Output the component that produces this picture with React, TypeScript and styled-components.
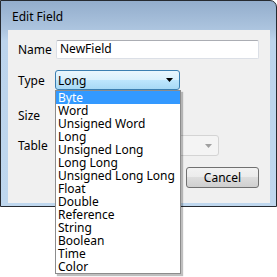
import React from 'react';
import styled, { createGlobalStyle } from 'styled-components';

const TYPES = [
  'Byte',
  'Word',
  'Unsigned Word',
  'Long',
  'Unsigned Long',
  'Long Long',
  'Unsigned Long Long',
  'Float',
  'Double',
  'Reference',
  'String',
  'Boolean',
  'Time',
  'Color',
];

const GlobalStyle = createGlobalStyle`
  html, body {
    margin: 0;
    padding: 0;
    background: #ffffff;
    font-family: 'Noto Sans', 'DejaVu Sans', sans-serif;
    font-size: 12px;
  }
`;

const Screen = styled.div`
  position: relative;
  width: 277px;
  height: 277px;
  overflow: hidden;
`;

const Window = styled.div`
  box-sizing: border-box;
  width: 277px;
  height: 207px;
  border: 1px solid #262a30;
  border-top-right-radius: 7px;
  background: linear-gradient(to bottom, #93adcc 0px, #aec6e0 30px, #bcd4ec 40px, #bfd7ee 100%);
  padding: 0 6px 3px 7px;
  display: flex;
  flex-direction: column;
`;

const TitleBar = styled.div`
  height: 29px;
  box-sizing: border-box;
  padding: 8px 0 0 4px;
  color: #000;
  font-size: 12px;
  line-height: 15px;
`;

const Client = styled.div`
  flex: 1;
  background: #f0f0f0;
  padding: 10px 10px 0 10px;
  display: flex;
  flex-direction: column;
`;

const Row = styled.div<{ $mt: number; $h: number }>`
  display: flex;
  align-items: center;
  margin-top: ${(p) => p.$mt}px;
  height: ${(p) => p.$h}px;
`;

const Label = styled.div`
  width: 37px;
  color: #000;
  line-height: 15px;
`;

const TextBox = styled.div`
  box-sizing: border-box;
  margin-left: 1px;
  width: 203px;
  height: 19px;
  border: 1px solid #dbdfe6;
  border-top-color: #abadb3;
  border-radius: 2px;
  background: #fff;
  padding-left: 3px;
  line-height: 16px;
  color: #000;
`;

const Combo = styled.div<{ $width: number; $disabled?: boolean }>`
  box-sizing: border-box;
  width: ${(p) => p.$width}px;
  height: 100%;
  display: flex;
  align-items: center;
  justify-content: space-between;
  padding: 0 3px 0 2px;
  border: 1px solid ${(p) => (p.$disabled ? '#d4d4d4' : '#3c7fb1')};
  border-radius: 3px;
  color: #000;
  background: ${(p) =>
    p.$disabled
      ? '#f4f4f4'
      : 'linear-gradient(to bottom, #eaf6fd 0%, #d9f0fc 50%, #bee6fd 50%, #a7d9f5 100%)'};
  svg {
    margin-right: 3px;
  }
`;

const Buttons = styled.div`
  display: flex;
  justify-content: flex-end;
  margin-top: 11px;
  margin-right: 1px;
`;

const Button = styled.div`
  box-sizing: border-box;
  width: 73px;
  height: 21px;
  border: 1px solid #707070;
  border-radius: 3px;
  background: linear-gradient(to bottom, #f2f2f2 0%, #ebebeb 50%, #dddddd 50%, #cfcfcf 100%);
  display: flex;
  align-items: center;
  justify-content: center;
  color: #000;
`;

const DropList = styled.ul`
  position: absolute;
  left: 55px;
  top: 90px;
  width: 126px;
  box-sizing: border-box;
  margin: 0;
  padding: 0;
  list-style: none;
  background: #fff;
  border: 1px solid #8c8c8c;
  box-shadow: 2px 2px 1px rgba(0, 0, 0, 0.25);
`;

const Option = styled.li<{ $active?: boolean }>`
  height: 13px;
  line-height: 13px;
  padding-left: 2px;
  white-space: nowrap;
  background: ${(p) => (p.$active ? '#3399ff' : 'transparent')};
  color: ${(p) => (p.$active ? '#fff' : '#000')};
`;

const Arrow: React.FC<{ color: string }> = ({ color }) => (
  <svg width="7" height="4" viewBox="0 0 7 4">
    <path d="M0 0h7L3.5 4z" fill={color} />
  </svg>
);

export default function App() {
  return (
    <Screen>
      <GlobalStyle />
      <Window>
        <TitleBar>Edit Field</TitleBar>
        <Client>
          <Row $mt={0} $h={19}>
            <Label>Name</Label>
            <TextBox>NewField</TextBox>
          </Row>
          <Row $mt={11} $h={20}>
            <Label>Type</Label>
            <Combo $width={125}>
              Long
              <Arrow color="#000" />
            </Combo>
          </Row>
          <Row $mt={15} $h={20}>
            <Label>Size</Label>
          </Row>
          <Row $mt={10} $h={21}>
            <Label>Table</Label>
            <Combo $width={164} $disabled>
              <span />
              <Arrow color="#a0a0a0" />
            </Combo>
          </Row>
          <Buttons>
            <Button>Cancel</Button>
          </Buttons>
        </Client>
      </Window>
      <DropList>
        {TYPES.map((t, i) => (
          <Option key={t} $active={i === 0}>
            {t}
          </Option>
        ))}
      </DropList>
    </Screen>
  );
}
